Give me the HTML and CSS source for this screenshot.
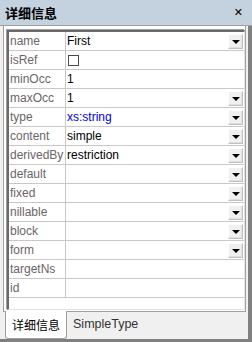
FILE: index.html
```html
<!DOCTYPE html>
<html>
<head>
<meta charset="utf-8">
<link rel="stylesheet" href="styles.css">
</head>
<body>
<div class="panel">
  <div class="title"><span class="title-text">详细信息</span><span class="close">✕</span></div>
  <div class="main">
    <div class="page">
      <div class="grid">
        <div class="row"><div class="k">name</div><div class="v"><span>First</span><span class="dd"></span></div></div>
        <div class="row"><div class="k">isRef</div><div class="v"><span class="cb"></span></div></div>
        <div class="row"><div class="k">minOcc</div><div class="v"><span>1</span></div></div>
        <div class="row"><div class="k">maxOcc</div><div class="v"><span>1</span><span class="dd"></span></div></div>
        <div class="row"><div class="k">type</div><div class="v"><span class="blue">xs:string</span><span class="dd"></span></div></div>
        <div class="row"><div class="k">content</div><div class="v"><span>simple</span><span class="dd"></span></div></div>
        <div class="row"><div class="k">derivedBy</div><div class="v"><span>restriction</span><span class="dd"></span></div></div>
        <div class="row"><div class="k">default</div><div class="v"><span class="dd"></span></div></div>
        <div class="row"><div class="k">fixed</div><div class="v"><span class="dd"></span></div></div>
        <div class="row"><div class="k">nillable</div><div class="v"><span class="dd"></span></div></div>
        <div class="row"><div class="k">block</div><div class="v"><span class="dd"></span></div></div>
        <div class="row"><div class="k">form</div><div class="v"><span class="dd"></span></div></div>
        <div class="row"><div class="k">targetNs</div><div class="v"></div></div>
        <div class="row"><div class="k">id</div><div class="v"></div></div>
      </div>
    </div>
    <div class="tabs">
      <div class="tab active">详细信息</div>
      <div class="tab">SimpleType</div>
    </div>
  </div>
</div>
</body>
</html>
```
FILE: styles.css
```css
* { box-sizing: border-box; }
html, body { margin: 0; padding: 0; }
body {
  background: #f0f0f0;
  font-family: "Liberation Sans", "Noto Sans CJK SC", sans-serif;
  font-size: 12px;
  color: #000;
}
.panel {
  width: 252px;
  height: 342px;
  display: flex;
  flex-direction: column;
  overflow: hidden;
}
.title {
  height: 26px;
  flex: none;
  background: #c4d1de;
  border-bottom: 1px solid #a0a0a0;
  display: flex;
  align-items: center;
  justify-content: space-between;
  padding: 0 9px 0 5px;
}
.title-text {
  font-family: "Noto Sans CJK SC", sans-serif;
  font-weight: bold;
  font-size: 13px;
}
.close {
  font-family: "DejaVu Sans", sans-serif;
  font-size: 11px;
  font-weight: bold;
}
.main {
  flex: 1;
  display: flex;
  flex-direction: column;
  padding: 0 2px 0 3px;
  border-right: 4px solid #808080;
  border-bottom: 3px solid #808080;
  min-height: 0;
}
.page {
  flex: 1;
  background: #fff;
  border-left: 1px solid #a0a0a0;
  border-right: 1px solid #a0a0a0;
  border-bottom: 1px solid #a0a0a0;
  padding: 4px 0 1px 3px;
  display: flex;
  flex-direction: column;
  min-height: 0;
}
.grid {
  flex: 1;
  border-top: 2px solid #696969;
  border-left: 2px solid #696969;
  border-right: 1px solid #e3e3e3;
  border-bottom: 1px solid #e3e3e3;
  box-shadow: -1px -1px 0 #a0a0a0;
  display: flex;
  flex-direction: column;
}
.row {
  height: 19px;
  flex: none;
  display: flex;
  border-bottom: 1px solid #c8c8c8;
}
.k {
  width: 57px;
  flex: none;
  border-right: 1px solid #c8c8c8;
  padding-left: 1px;
  color: #6b6468;
  line-height: 18px;
  white-space: nowrap;
  overflow: hidden;
}
.v {
  flex: 1;
  display: flex;
  align-items: center;
  justify-content: space-between;
  padding: 0 1px 0 1px;
  line-height: 18px;
}
.blue { color: #0000ff; }
.dd {
  width: 15px;
  height: 15px;
  margin-left: auto;
  background: #f0f0f0;
  border: 1px solid #c0c0c0;
  border-top-color: #fff;
  border-left-color: #fff;
  box-shadow: inset -1px -1px 0 #e0e0e0;
  position: relative;
}
.dd::after {
  content: "";
  position: absolute;
  left: 3px;
  top: 5px;
  border-left: 4px solid transparent;
  border-right: 4px solid transparent;
  border-top: 4px solid #000;
}
.cb {
  width: 11px;
  height: 11px;
  border: 1px solid #4a4a4a;
  background: #fff;
  margin-left: 1px;
}
.tabs {
  height: 28px;
  flex: none;
  display: flex;
  align-items: flex-start;
  padding-left: 2px;
  margin-top: -1px;
}
.tab {
  height: 26px;
  line-height: 26px;
  padding: 0 6px;
  color: #333;
  font-size: 12.5px;
}
.tab.active {
  background: #fff;
  color: #000;
  height: 28px;
  line-height: 27px;
  font-family: "Noto Sans CJK SC", sans-serif;
  font-size: 12px;
  border: 1px solid #a0a0a0;
  border-top: none;
  border-radius: 0 0 3px 3px;
}
```
